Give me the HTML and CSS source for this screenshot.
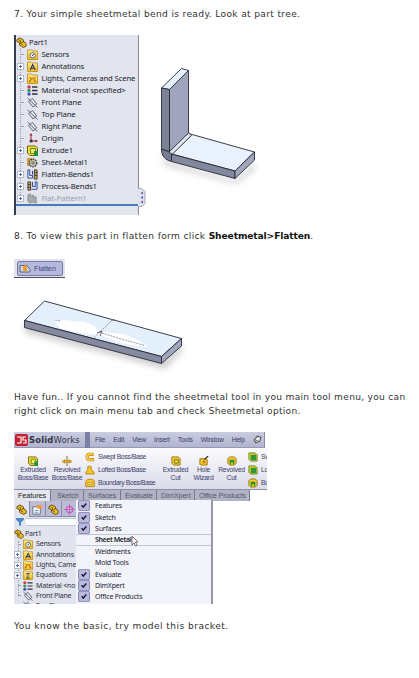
FILE: index.html
```html
<!DOCTYPE html>
<html lang="en">
<head>
<meta charset="utf-8">
<title>Sheetmetal bend</title>
<link rel="stylesheet" href="styles.css">
</head>
<body>
<svg class="defs" width="0" height="0">
  <defs>
    <linearGradient id="gold" x1="0" y1="0" x2="0" y2="1"><stop offset="0" stop-color="#fff08a"/><stop offset="1" stop-color="#efb616"/></linearGradient>
    <filter id="soft" x="-20%" y="-40%" width="140%" height="200%"><feGaussianBlur stdDeviation="3"/></filter>
    <g id="folder"><path d="M.5 1h4l1 1h5v8.500H.5z" fill="url(#gold)" stroke="#b98a18" stroke-width=".8"/></g>
    <symbol id="part" viewBox="0 0 12 12"><path d="M1 3l3-2 4 2v2l3 2v3l-3 1.500-4-2.500V6L1 5z" fill="#f2c82b" stroke="#5c4208"/><path d="M3 3l2 1 0 3 3 2M6 6l3-1" fill="none" stroke="#5c4208" stroke-width=".9"/></symbol>
    <symbol id="sensors" viewBox="0 0 11 11"><use href="#folder"/><circle cx="5.700" cy="6.300" r="2.700" fill="#f4f4ec" stroke="#667"/><path d="M5 7l2-2" stroke="#335"/></symbol>
    <symbol id="annot" viewBox="0 0 11 11"><use href="#folder"/><path d="M3.200 9L5.700 3.500 8.200 9M4 7.300h3.400" fill="none" stroke="#1c2f78" stroke-width="1.100"/></symbol>
    <symbol id="lights" viewBox="0 0 11 11"><use href="#folder"/><path d="M2.500 9l1.200-2.500L5.500 5l1.800 1.500L8.500 9M2.500 4l1.500 1.500M8.500 4L7 5.500" fill="none" stroke="#b04a08"/></symbol>
    <symbol id="equat" viewBox="0 0 11 11"><use href="#folder"/><path d="M7.500 4H4l2 2.300L4 9h3.500" fill="none" stroke="#283d85"/></symbol>
    <symbol id="material" viewBox="0 0 11 11"><circle cx="2" cy="2" r="1.700" fill="#d2364b"/><circle cx="2" cy="5.500" r="1.700" fill="#3d9a50"/><circle cx="2" cy="9" r="1.700" fill="#3e55b5"/><path d="M5 2h5.500M5 5.500h5.500M5 9h5.500" stroke="#30323c" stroke-width="1.300"/></symbol>
    <symbol id="plane" viewBox="0 0 11 11"><path d="M1.500 4.500L5.500 1.500 9.800 7 6 10zM.5 1l10 9.500" fill="none" stroke="#555a68" stroke-width=".9"/></symbol>
    <symbol id="origin" viewBox="0 0 11 11"><path d="M4 1v7h6" fill="none" stroke="#8c2a35"/><path d="M4 0L2.500 2.500h3zM11 8L8.500 6.500v3z" fill="#b8202e"/><path d="M2.700 6.700h2.700v2.700H2.700z" fill="#333"/></symbol>
    <symbol id="extrude" viewBox="0 0 11 11"><path d="M.5 1h8l2 2v7.500H3L.5 8z" fill="#f6dc35" stroke="#77610e"/><path d="M3.500 3.500h5v5h-5z" fill="#f4ec60" stroke="#5d8f1d"/><path d="M7 6h4v5H7z" fill="#23913c"/></symbol>
    <symbol id="gear" viewBox="0 0 11 11"><path d="M0 1h6v8H0z" fill="#d2a04a"/><circle cx="6" cy="6" r="3.700" fill="#ddd5b0" stroke="#3c3c44" stroke-width="1.500" stroke-dasharray="1.600 .8"/><circle cx="6" cy="6" r="1.300" fill="#eee" stroke="#555"/></symbol>
    <symbol id="flatb" viewBox="0 0 12 12"><path d="M1 1v9h5V7H3V1z" fill="#e8ebf7" stroke="#28428c"/><path d="M8 1h3v10H8z" fill="#e8a72a" stroke="#30323c"/><path d="M8 4h3M8 7h3M6 2v4" stroke="#26366e"/></symbol>
    <symbol id="procb" viewBox="0 0 12 12"><path d="M1 1h3v9H1z" fill="#e8a72a" stroke="#30323c"/><path d="M6 1v5h3V1h2v8H5" fill="#dce2f5" stroke="#28428c"/><path d="M1 4h3M1 7h3" stroke="#26366e"/></symbol>
    <symbol id="flatp" viewBox="0 0 12 12"><path d="M1 2l3-1v3l3-2v3l3-1v7l-4-1-3 1-2-2z" fill="#aaa" stroke="#8b8d94"/></symbol>
    <symbol id="loft" viewBox="0 0 11 11"><path d="M1 10V8l2-3V2l2-1 2 1v3l3 3v2z" fill="#f5c52c" stroke="#b8851a"/></symbol>
    <symbol id="swept" viewBox="0 0 11 11"><path d="M9.500 2.500H5C1.500 2.500 1.500 8.500 5 8.500h5" fill="none" stroke="#b88116" stroke-width="3.600"/><path d="M9 2.500H5C1.500 2.500 1.500 8.500 5 8.500h4.500" fill="none" stroke="#f8cd3c" stroke-width="2.300"/></symbol>
    <symbol id="bound" viewBox="0 0 11 11"><path d="M.8 4l2-2.500h5L10.200 3v6.500H.8z" fill="#f5c52c" stroke="#b8851a"/><path d="M3 5h5v2H3z" fill="#fbe9a0" stroke="#a57615" stroke-width=".6"/></symbol>
    <symbol id="revolve" viewBox="0 0 11 11"><path d="M5.500 0v11" stroke="#766326"/><path d="M0 6l3-2v4zM11 6L8 4v4zM3 5h5v2H3z" fill="#f2bd22" stroke="#aa7510" stroke-width=".6"/></symbol>
    <symbol id="cut" viewBox="0 0 11 11"><path d="M1 1h7l2 2v7H3L1 8z" fill="#f3cb2d" stroke="#98700f"/><path d="M4 4h4v4H4z" fill="#e3d04a" stroke="#7d7a1c"/></symbol>
    <symbol id="holew" viewBox="0 0 11 11"><path d="M1 3h7l1 1v6H2L1 9z" fill="#f3cb2d" stroke="#98700f"/><path d="M4 5h3v3H4z" fill="#c4791c"/><path d="M6 4l4-4" stroke="#333" stroke-width="1.400"/></symbol>
    <symbol id="rcut" viewBox="0 0 11 11"><path d="M1 3l2-2h5l2 2v5l-2 2H3L1 8z" fill="#f3cb2d" stroke="#98700f"/><path d="M3 4h5v5H6.500V7h-2v2H3z" fill="#278f2d"/></symbol>
    <symbol id="gcut" viewBox="0 0 11 11"><path d="M1 1h7l2 2v7H3L1 8z" fill="#f3cb2d" stroke="#5c8a1e"/><path d="M3 3h6v6H3z" fill="#2c9a36"/></symbol>
    <symbol id="check" viewBox="0 0 12 11"><rect x=".5" y=".3" width="11" height="10.400" rx="1.500" fill="#b9bade" stroke="#8788b3"/><path d="M3.700 5.200l1.500 2L8.300 3.500" fill="none" stroke="#15152a" stroke-width="1.400"/></symbol>
  </defs>
</svg>
<main class="article">
  <p class="step step-seven"><span>7. Your simple sheetmetal bend is ready. Look at part tree.</span></p>
  <section class="figure bend">
    <div class="tree">
      <div class="row root"><svg><use href="#part"/></svg><span>Part1</span></div>
      <div class="row"><i></i><svg><use href="#sensors"/></svg><span>Sensors</span></div>
      <div class="row"><i class="plus"></i><svg><use href="#annot"/></svg><span>Annotations</span></div>
      <div class="row"><i class="plus"></i><svg><use href="#lights"/></svg><span>Lights, Cameras and Scene</span></div>
      <div class="row"><i></i><svg><use href="#material"/></svg><span>Material &lt;not specified&gt;</span></div>
      <div class="row"><i></i><svg><use href="#plane"/></svg><span>Front Plane</span></div>
      <div class="row"><i></i><svg><use href="#plane"/></svg><span>Top Plane</span></div>
      <div class="row"><i></i><svg><use href="#plane"/></svg><span>Right Plane</span></div>
      <div class="row"><i></i><svg><use href="#origin"/></svg><span>Origin</span></div>
      <div class="row"><i class="plus"></i><svg><use href="#extrude"/></svg><span>Extrude1</span></div>
      <div class="row"><i></i><svg><use href="#gear"/></svg><span>Sheet-Metal1</span></div>
      <div class="row"><i class="plus"></i><svg><use href="#flatb"/></svg><span>Flatten-Bends1</span></div>
      <div class="row"><i class="plus"></i><svg><use href="#procb"/></svg><span>Process-Bends1</span></div>
      <div class="row muted"><i class="plus"></i><svg><use href="#flatp"/></svg><span>Flat-Pattern1</span></div>
      <div class="rollback"></div>
      <svg class="grip" viewBox="0 0 8 19"><path d="M0 .5h4l3 3v12l-3 3H0" fill="#dfe2ee" stroke="#a8aabd"/><path d="M5 3.500L2.500 5 5 6.500zM5 8L2.500 9.500 5 11zM5 12.500L2.500 14 5 15.500z" fill="#5660a0"/></svg>
    </div>
    <svg class="bracket" viewBox="140 50 140 150">
      <path d="M160 158l75 22 20-18v8l-19 14-70-18z" fill="#777" opacity=".3" filter="url(#soft)"/>
      <g stroke="#272a34" stroke-width=".9" stroke-linejoin="round">
        <path d="M161.500 88L181.500 68.500 188.500 70.500 169.500 89.500z" fill="#e5f0fa"/>
        <path d="M169.500 89.500L188.500 70.500V134L169.500 153z" fill="#a1a4bd"/>
        <path d="M161.500 88L169.500 89.500V152L161.500 149z" fill="#7d8197"/>
        <path d="M161.500 149L169.500 152 171.500 154V161.500C165 160 161.500 156 161.500 149z" fill="#787c90"/>
        <path d="M188.500 133.500L254.500 152 235 171 171.500 154z" fill="#e8f1fc"/>
        <path d="M169.500 151.500L188.500 133 191.500 135.500 172 154.500z" fill="#d7dbe8"/>
        <path d="M171.500 154L235 171V178.500L171.500 161.500z" fill="#83889e"/>
        <path d="M235 171L254.500 152V160L235 178.500z" fill="#a1a5bd"/>
      </g>
      <path d="M170.500 153l19-19" stroke="#fff" stroke-width=".9"/>
    </svg>
  </section>
  <p class="step step-eight"><span>8. To view this part in flatten form click <b>Sheetmetal&gt;Flatten</b>.</span></p>
  <div class="flatten"><button><svg viewBox="0 0 12 9"><path d="M1 1.500h7l3 4v2.500H1z" fill="#d0d3df" stroke="#62657f"/><path d="M4 3l2.500-3L8 4v4L4 6z" fill="#eb9c25"/></svg><span>Flatten</span></button></div>
  <svg class="plate" viewBox="14 290 190 90">
    <path d="M25 322l139 37 18-15v8l-17 17-140-36z" fill="#777" opacity=".35" filter="url(#soft)"/>
    <g stroke="#262a34" stroke-width=".9" stroke-linejoin="round"><path d="M24.500 320.500L44.500 301 181.500 338.500 161.500 356.500z" fill="#e4effc"/><path d="M24.500 320.500L161.500 356.500V363.500L24.500 327.500z" fill="#858aa1"/><path d="M161.500 356.500L181.500 338.500V346L161.500 363.500z" fill="#a1a5be"/></g>
    <path d="M54 318l4 2q10 0 14 1 15 0 22 5 5 7 20 7 12 1 20 5l13 8-5 .5-19-3-14-5q-8-3-13-4-10 0-18-2l-17-4q-7-5-7-11" fill="#fff"/>
    <path d="M94 337.500l18.500-17.500M55 320l6 1M99 332l22 7 24 6.500" fill="none" stroke="#777b86" stroke-width=".8" stroke-dasharray="2 1"/><path d="M97 333l5-2-2 5M111 320h4" fill="none" stroke="#666"/>
  </svg>
  <p class="step have-fun"><span>Have fun.. If you cannot find the sheetmetal tool in you main tool menu, you can</span><span>right click on main menu tab and check Sheetmetal option.</span></p>
  <section class="app">
    <header class="titlebar"><svg class="logo" viewBox="0 0 13 12"><rect width="13" height="12" rx="2" fill="#c41f30"/><path d="M2 3h4v6H2M11 3H8v3h3v3H8" fill="none" stroke="#fff" stroke-width="1.200"/></svg><strong><b>Solid</b>Works</strong><nav><span>File</span><span>Edit</span><span>View</span><span>Insert</span><span>Tools</span><span>Window</span><span>Help</span><svg viewBox="0 0 8 8"><path d="M1 4.500L4 1l3 1-1 3.500L2.500 7z" fill="#eee" stroke="#555"/><path d="M2 4.500l3 1" stroke="#555" stroke-width=".7"/></svg></nav></header>
    <div class="ribbon">
      <div class="tool wide"><svg><use href="#extrude"/></svg><span>Extruded</span><span>Boss/Base</span></div>
      <div class="tool wide"><svg><use href="#revolve"/></svg><span>Revolved</span><span>Boss/Base</span></div>
      <div class="stack"><div><svg><use href="#swept"/></svg><span>Swept Boss/Base</span></div><div><svg><use href="#loft"/></svg><span>Lofted Boss/Base</span></div><div><svg><use href="#bound"/></svg><span>Boundary Boss/Base</span></div></div>
      <div class="tool"><svg><use href="#cut"/></svg><span>Extruded</span><span>Cut</span></div>
      <div class="tool hole"><svg><use href="#holew"/></svg><span>Hole</span><span>Wizard</span></div>
      <div class="tool"><svg><use href="#rcut"/></svg><span>Revolved</span><span>Cut</span></div>
      <div class="stack last"><div><svg><use href="#gcut"/></svg><span>Sw</span></div><div><svg><use href="#gcut"/></svg><span>Lo</span></div><div><svg><use href="#rcut"/></svg><span>Bo</span></div></div>
    </div>
    <div class="tabs"><span class="active">Features</span><span>Sketch</span><span>Surfaces</span><span>Evaluate</span><span>DimXpert</span><span>Office Products</span></div>
    <div class="lower">
      <div class="manager">
        <div class="icons"><span class="on"><svg><use href="#part"/></svg></span><span><svg viewBox="0 0 12 12"><path d="M1 3h8v8H1z" fill="#fff" stroke="#667"/><path d="M5 1h6v4H5z" fill="#ec9a4b"/><path d="M3 7h4M3 9h4" stroke="#468cc2"/></svg></span><span><svg><use href="#part"/></svg></span><span><svg viewBox="0 0 12 12"><circle cx="6" cy="6" r="3.500" fill="none" stroke="#c65bbd" stroke-width="1.300"/><path d="M6 0v12M0 6h12" stroke="#c65bbd"/></svg></span></div>
        <div class="filter"><svg viewBox="0 0 8 8"><path d="M0 0h8v1.500L5 4.500v3L3 8V4.500L0 1.500z" fill="#4f89cd"/></svg><span></span></div>
        <div class="small-tree">
          <div class="row root"><svg><use href="#part"/></svg><span>Part1</span></div>
          <div class="row"><i></i><svg><use href="#sensors"/></svg><span>Sensors</span></div>
          <div class="row"><i class="plus"></i><svg><use href="#annot"/></svg><span>Annotations</span></div>
          <div class="row"><i class="plus"></i><svg><use href="#lights"/></svg><span>Lights, Came</span></div>
          <div class="row"><i class="plus"></i><svg><use href="#equat"/></svg><span>Equations</span></div>
          <div class="row"><i></i><svg><use href="#material"/></svg><span>Material &lt;no</span></div>
          <div class="row"><i></i><svg><use href="#plane"/></svg><span>Front Plane</span></div>
          <div class="row"><i></i><svg><use href="#plane"/></svg><span>Top Plane</span></div>
        </div>
      </div>
      <div class="menu">
        <div><svg><use href="#check"/></svg><span>Features</span></div><div><svg><use href="#check"/></svg><span>Sketch</span></div><div><svg><use href="#check"/></svg><span>Surfaces</span></div>
        <div class="hover"><span>Sheet Metal</span><svg class="cursor" viewBox="0 0 8 12"><path d="M1 1v9l2-2 1.500 3 1.500-.7L4.500 7H7z" fill="#fff" stroke="#555" stroke-width=".8"/></svg></div>
        <div><span>Weldments</span></div><div><span>Mold Tools</span></div>
        <div><svg><use href="#check"/></svg><span>Evaluate</span></div><div><svg><use href="#check"/></svg><span>DimXpert</span></div><div><svg><use href="#check"/></svg><span>Office Products</span></div>
      </div>
    </div>
  </section>
  <p class="step ending"><span>You know the basic, try model this bracket.</span></p>
</main>
</body>
</html>
```
FILE: styles.css
```css
* { box-sizing: border-box; }
body { margin: 0; background: #fff; color: #333; }
.defs { display: block; height: 0; }
.article { width: 419px; height: 678px; overflow: hidden; padding: 7px 0 0 14px; font: 9.1px/14px "DejaVu Sans", sans-serif; }
.step { margin: 0; height: 14px; letter-spacing: .34px; white-space: nowrap; }
.step b { color: #111; letter-spacing: -.1px; }
.figure { display: flex; margin-top: 14px; height: 180px; }
.tree { position: relative; width: 125px; height: 180px; padding-top: 1px; background: #e2e5ee; border-left: 2px solid #333c4d; border-right: 1px solid #85899b; font: 7.7px/12px "Noto Sans", sans-serif; letter-spacing: -.12px; color: #20232c; }
.tree::before, .small-tree::before { content: ""; position: absolute; left: 4px; top: 13px; bottom: 16px; border-left: 1px dotted #9a9eac; }
.row { display: flex; align-items: center; height: 12px; white-space: nowrap; padding-left: 1px; }
.row svg { width: 11px; height: 11px; margin-right: 3.5px; flex: none; position: relative; }
.row i { width: 7px; height: 7px; margin-right: 3px; flex: none; background: linear-gradient(#9a9eac,#9a9eac) 4px 3px/6px 1px no-repeat; position: relative; }
.row .plus { border: 1px solid #b4bccb; background: linear-gradient(#4a6ca3,#4a6ca3) 1px 2px/3px 1px no-repeat, linear-gradient(#4a6ca3,#4a6ca3) 2px 1px/1px 3px no-repeat #fff; }
.row.root { padding-left: 0; }
.row.root svg { margin-right: 2px; }
.muted { color: #9a9ca6; }
.rollback { position: absolute; left: 0; right: 0; top: 169px; height: 2px; background: #467bb8; }
.grip { position: absolute; right: -8px; top: 153px; width: 8px; height: 19px; }
.bracket { width: 140px; height: 150px; margin: 15px 0 0 1px; }
.step-eight { margin-top: 14px; }
.flatten { margin-top: 16px; width: 51px; height: 19px; padding: 2px 2px 0 3px; background: #e3e3ef; border-bottom: 1px solid #4d4d61; }
.flatten button { display: flex; align-items: center; gap: 3px; width: 46px; height: 15px; padding: 0 1px; border: 1px solid #777b9f; border-radius: 2px; background: #b6b8df; font: 7.4px/10px "Liberation Sans", sans-serif; letter-spacing: -.1px; color: #444a80; }
.flatten svg { width: 12px; height: 9px; flex: none; }
.plate { display: block; margin-top: 12px; width: 190px; height: 90px; }
.have-fun { display: flex; flex-direction: column; height: 28px; margin-top: 10px; letter-spacing: .285px; }
.app { margin-top: 14px; width: 253px; height: 172px; overflow: hidden; font: 6.8px/8px "Liberation Sans", sans-serif; color: #393c69; }
.titlebar { width: 251px; height: 16px; background: linear-gradient(#c9cbe0,#b3b5cf); display: flex; align-items: center; border-bottom: 1px solid #9698b7; border-right: 1px solid #8587a5; white-space: nowrap; }
.logo { width: 13px; height: 12px; margin-left: 1px; flex: none; }
.titlebar strong { flex: none; font: 9.4px/12px "DejaVu Sans Condensed", "DejaVu Sans", sans-serif; letter-spacing: .15px; color: #303446; margin-left: 1px; width: 56px; }
.titlebar nav { display: flex; align-items: center; justify-content: space-between; flex: 1; height: 16px; padding: 0 2px 0 5px; border-left: 5px solid #7c80a6; letter-spacing: -.2px; }
.titlebar nav svg { width: 9px; height: 9px; }
.ribbon { display: flex; height: 42px; padding-left: 2px; background: linear-gradient(#fbfbfe,#dadbe9); border-bottom: 1px solid #8c8eaa; white-space: nowrap; }
.tool { width: 31px; flex: none; display: flex; flex-direction: column; align-items: center; padding-top: 8px; letter-spacing: -.2px; }
.tool.wide { width: 34px; }
.tool.hole { width: 25px; }
.tool svg { width: 10px; height: 10px; }
.tool span { line-height: 7.6px; }
.stack { width: 76px; padding: 2px 0 0 1px; flex: none; letter-spacing: -.35px; }
.stack div { display: flex; gap: 3px; align-items: center; height: 13px; }
.stack svg { width: 10px; height: 10px; flex: none; }
.tabs { display: grid; grid-template-columns: 37px 33px 37px 36px 38px 55px; height: 11px; width: 236px; background: #b1b3c4; color: #55576c; white-space: nowrap; font-size: 7.3px; line-height: 11px; letter-spacing: -.1px; }
.tabs span { border-right: 1px solid #777991; padding-left: 4px; }
.tabs span:nth-child(2) { padding-left: 6px; }
.tabs span:last-child { letter-spacing: -.2px; }
.tabs .active { background: #e6e6ef; color: #222; }
.lower { display: flex; height: 103px; }
.manager { width: 62px; height: 103px; overflow: hidden; background: #e1e3ee; }
.icons { display: flex; height: 16px; background: #bbbdd6; }
.icons span { width: 16px; height: 16px; padding: 3px 2px; border: solid #8789a6; border-width: 0 1px 1px 0; }
.icons .on { background: #e1e3ee; border-bottom: 0; }
.icons svg { display: block; width: 11px; height: 11px; }
.filter { display: flex; gap: 2px; height: 11px; padding: 1px 0 1px 2px; }
.filter svg { display: block; width: 8px; height: 8px; flex: none; }
.filter span { flex: 1; height: 8px; background: #fff; border: 1px solid #c3c7dc; border-width: 1px 0; }
.small-tree { position: relative; padding-top: 1px; font: 7px/10px "Noto Sans", sans-serif; letter-spacing: -.2px; color: #30323e; }
.small-tree .row { height: 10.3px; padding-left: 0; }
.small-tree .row i { margin-right: 2px; }
.small-tree .row svg { width: 10px; height: 10px; margin-right: 3px; }
.small-tree .row.root svg { margin-right: 1px; }
.menu { width: 137px; height: 105px; margin-top: -1px; background: #f3f3fa; border-right: 2px solid #9798a7; font: 7px/11px "Noto Sans", sans-serif; letter-spacing: -.2px; color: #22242f; }
.menu div { display: flex; align-items: center; height: 11.4px; position: relative; padding-left: 2px; }
.menu svg { width: 12px; height: 11px; }
.menu span { margin-left: auto; width: 116px; }
.menu .hover { font-weight: 600; letter-spacing: -.4px; border: solid #c2c5d6; border-width: 1px 0; }
.menu .cursor { position: absolute; left: 55px; top: 0; width: 8px; height: 12px; }
.ending { margin-top: 15px; letter-spacing: .43px; }
```
